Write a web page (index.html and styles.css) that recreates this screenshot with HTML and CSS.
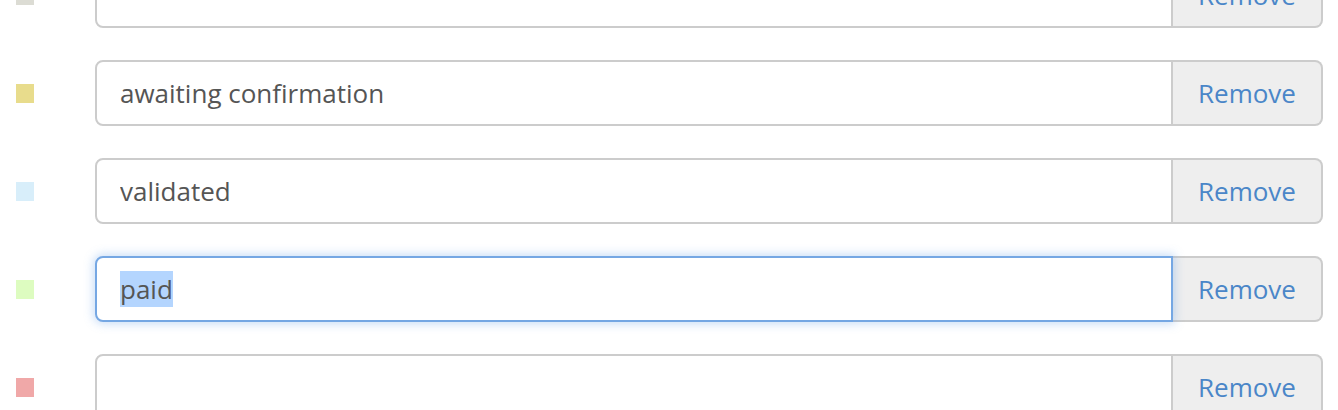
FILE: index.html
```
<!doctype html>
<html lang="en">
 <head>
  <meta charset="UTF-8">
  <meta name="viewport" content="width=device-width, initial-scale=1.0">
  <title>Statuses</title>
  <link rel="stylesheet" href="styles.css">
 </head>
 <body>
  <div class="status-list">
   <div class="status-row">
    <span class="swatch swatch-grey"></span>
    <div class="input-group">
     <input type="text" class="status-input" value="">
     <button class="remove-btn">Remove</button>
    </div>
   </div>
   <div class="status-row">
    <span class="swatch swatch-yellow"></span>
    <div class="input-group">
     <input type="text" class="status-input" value="awaiting confirmation">
     <button class="remove-btn">Remove</button>
    </div>
   </div>
   <div class="status-row">
    <span class="swatch swatch-blue"></span>
    <div class="input-group">
     <input type="text" class="status-input" value="validated">
     <button class="remove-btn">Remove</button>
    </div>
   </div>
   <div class="status-row">
    <span class="swatch swatch-green"></span>
    <div class="input-group">
     <input type="text" class="status-input" id="current-status" value="paid">
     <button class="remove-btn">Remove</button>
    </div>
   </div>
   <div class="status-row">
    <span class="swatch swatch-red"></span>
    <div class="input-group">
     <input type="text" class="status-input" value="">
     <button class="remove-btn">Remove</button>
    </div>
   </div>
  </div>
  <script>
      // keep the edited field focused with its text selected
      const current = document.getElementById('current-status');
      current.focus();
      current.select();
  </script>
 </body>
</html>
```

FILE: styles.css
```
body {
    font-family: "Open Sans", Arial, sans-serif;
    margin: 0;
    background-color: #fff;
    overflow: hidden;
}
.status-list {
    margin-top: -38px;
    padding: 0 15px 0 16px;
    display: flex;
    flex-direction: column;
    gap: 32px;
}
.status-row {
    display: flex;
    align-items: center;
}
.swatch {
    width: 18px;
    height: 19px;
    flex: none;
    margin-right: 61px;
}
.swatch-grey { background-color: #dcdcd4; }
.swatch-yellow { background-color: #e8dc8c; }
.swatch-blue { background-color: #d8eefa; }
.swatch-green { background-color: #ddfcc0; }
.swatch-red { background-color: #f0a8a8; }
.input-group {
    flex: 1;
    display: flex;
    height: 66px;
}
.status-input {
    flex: 1;
    min-width: 0;
    box-sizing: border-box;
    height: 100%;
    margin: 0;
    padding: 0 23px;
    font-family: inherit;
    font-size: 26px;
    color: #555;
    border: 2px solid #ccc;
    border-radius: 8px 0 0 8px;
    outline: none;
}
.status-input:focus {
    border-color: #75a7e3;
    box-shadow: 0 0 10px 2px rgba(102, 160, 233, 0.35);
    position: relative;
    z-index: 1;
}
.status-input::selection {
    background-color: #b4d5fe;
    color: #555;
}
.remove-btn {
    flex: none;
    width: 150px;
    box-sizing: border-box;
    margin: 0;
    font-family: inherit;
    font-size: 26px;
    color: #4a86c8;
    background-color: #eee;
    border: 2px solid #ccc;
    border-left: none;
    border-radius: 0 8px 8px 0;
    cursor: pointer;
}
```
